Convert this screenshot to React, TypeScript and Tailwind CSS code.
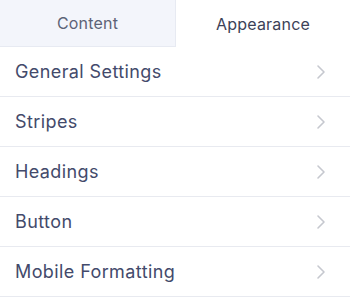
import { ChevronRight } from 'lucide-react';

const items = ['General Settings', 'Stripes', 'Headings', 'Button', 'Mobile Formatting'];

export default function App() {
  return (
    <div className="w-[350px] h-[307px] bg-white overflow-hidden" style={{ fontFamily: 'Inter, "Noto Sans", sans-serif' }}>
      {/* Tabs */}
      <div className="flex h-[47px]">
        <button className="w-[176px] flex items-center justify-center bg-[#f3f5fb] border-b border-r border-[#e7eaf2] text-[16px] tracking-[0.2px] text-[#5d6377]">
          Content
        </button>
        <button className="flex-1 flex items-center justify-center bg-white text-[16px] tracking-[0.2px] text-[#3c4257]">
          Appearance
        </button>
      </div>

      {/* Settings list */}
      <ul>
        {items.map(label => (
          <li key={label} className="h-[50px] flex items-center justify-between pl-[15px] pr-[17px] border-b border-[#e8eaf0]">
            <span className="text-[18px] tracking-[0.4px] text-[#434a6b]">{label}</span>
            <ChevronRight size={24} strokeWidth={1.6} className="text-[#c6c8cf]" />
          </li>
        ))}
      </ul>
    </div>
  );
}
